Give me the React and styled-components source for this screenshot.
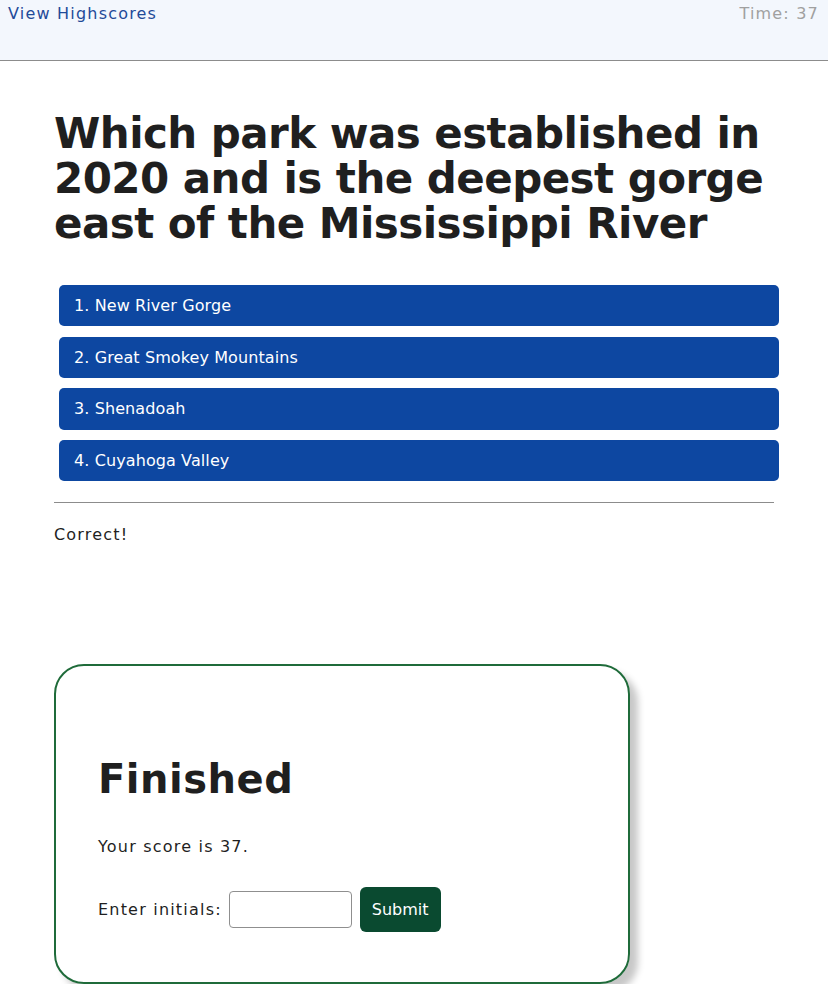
import React from "react";
import styled, { createGlobalStyle } from "styled-components";

const GlobalStyle = createGlobalStyle`
  body {
    margin: 0;
    font-family: "DejaVu Sans", Verdana, sans-serif;
    font-size: 16px;
    letter-spacing: 1.2px;
    color: #1f1f1f;
    background: #fff;
  }
`;

const Header = styled.header`
  display: flex;
  justify-content: space-between;
  align-items: flex-start;
  height: 61px;
  padding: 4px 9px 0 8px;
  box-sizing: border-box;
  background: #f3f7fd;
  border-bottom: 1px solid #8c8c8c;
`;

const HighscoreLink = styled.a`
  color: #1f4b99;
  text-decoration: none;
`;

const Timer = styled.span`
  color: #a0a0a0;
`;

const Main = styled.main`
  width: 720px;
  margin: 0 auto;
  padding-top: 50px;
`;

const Question = styled.h1`
  margin: 0 0 39px;
  font-size: 42px;
  line-height: 45px;
  letter-spacing: -0.55px;
  font-weight: bold;
  color: #1f1f1f;
`;

const Choices = styled.div`
  display: flex;
  flex-direction: column;
  gap: 10.33px;
  padding-left: 5px;
`;

const Choice = styled.button`
  width: 720px;
  height: 41.33px;
  border: none;
  border-radius: 5px;
  background: #0d47a1;
  color: #fff;
  font-family: inherit;
  font-size: 16px;
  letter-spacing: 0.1px;
  text-align: left;
  padding: 0 15px;
  cursor: pointer;
`;

const Divider = styled.hr`
  margin: 21px 0 0;
  border: none;
  border-top: 1px solid #8c8c8c;
`;

const Feedback = styled.p`
  margin: 22px 0 0;
`;

const Card = styled.section`
  margin-top: 120px;
  width: 576px;
  height: 320px;
  box-sizing: border-box;
  border: 2px solid #1f6b3a;
  border-radius: 30px;
  box-shadow: 8px 8px 7px rgba(0, 0, 0, 0.22);
  padding: 90px 42px 0;
`;

const CardTitle = styled.h2`
  margin: 0 0 35px;
  font-size: 40px;
  letter-spacing: 0.5px;
  font-weight: bold;
`;

const Score = styled.p`
  margin: 0 0 31px;
`;

const InitialsForm = styled.form`
  display: flex;
  align-items: center;
  gap: 8px;
`;

const Initials = styled.input`
  width: 123px;
  height: 37px;
  box-sizing: border-box;
  border: 1px solid #8f8f8f;
  border-radius: 4px;
  margin-left: -1px;
`;

const SubmitButton = styled.button`
  height: 45px;
  padding: 0 12px;
  border: none;
  border-radius: 6px;
  background: #0a4a30;
  color: #fff;
  font-family: inherit;
  font-size: 16px;
  letter-spacing: 0;
`;

const Footer = styled.footer`
  border-top: 1px solid #1a1a1a;
  height: 20px;
`;

const choices = [
  "New River Gorge",
  "Great Smokey Mountains",
  "Shenadoah",
  "Cuyahoga Valley",
];

export default function App() {
  return (
    <>
      <GlobalStyle />
      <Header>
        <HighscoreLink href="#">View Highscores</HighscoreLink>
        <Timer>Time: 37</Timer>
      </Header>
      <Main>
        <Question>
          Which park was established in 2020 and is the deepest gorge east of
          the Mississippi River
        </Question>
        <Choices>
          {choices.map((c, i) => (
            <Choice key={c}>
              {i + 1}. {c}
            </Choice>
          ))}
        </Choices>
        <Divider />
        <Feedback>Correct!</Feedback>
        <Card>
          <CardTitle>Finished</CardTitle>
          <Score>Your score is 37.</Score>
          <InitialsForm onSubmit={(e) => e.preventDefault()}>
            Enter initials:
            <Initials type="text" />
            <SubmitButton type="submit">Submit</SubmitButton>
          </InitialsForm>
        </Card>
      </Main>
      <Footer />
    </>
  );
}
